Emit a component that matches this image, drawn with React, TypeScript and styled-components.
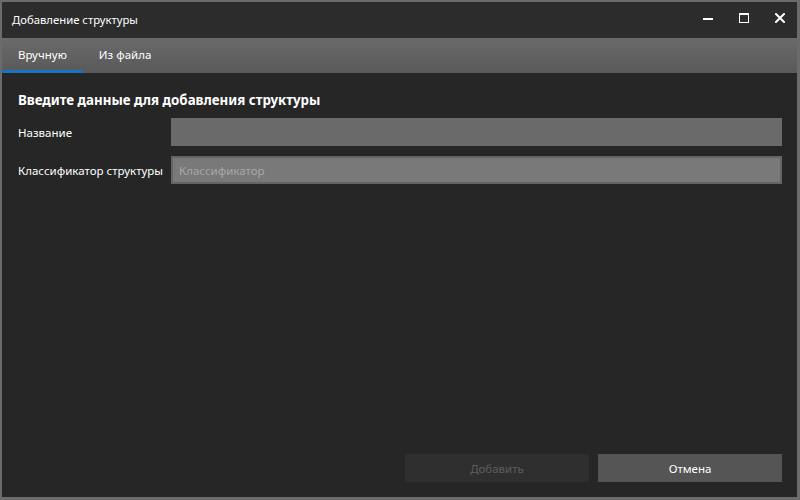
import styled, { createGlobalStyle } from 'styled-components';

const GlobalStyle = createGlobalStyle`
  html, body {
    margin: 0;
    padding: 0;
    background: #262626;
  }
  body {
    font-family: 'Noto Sans', 'Open Sans', sans-serif;
  }
`;

const Window = styled.div`
  width: 800px;
  height: 500px;
  box-sizing: border-box;
  border-style: solid;
  border-color: #6b6b6b;
  border-width: 2px 3px 3px 2px;
  display: flex;
  flex-direction: column;
  background: #262626;
  overflow: hidden;
`;

const TitleBar = styled.div`
  height: 36px;
  display: flex;
  align-items: center;
  padding-left: 10px;
  background: #2c2c2c;
  color: #ffffff;
  font-size: 11.3px;
`;

const Title = styled.div`
  flex: 1;
  margin-top: -2px;
`;

const Controls = styled.div`
  display: flex;
  align-items: center;
  height: 100%;
`;

const ControlButton = styled.div`
  width: 36px;
  height: 100%;
  box-sizing: border-box;
  padding-left: 2px;
  display: flex;
  align-items: center;
  justify-content: center;
  margin-top: -4px;
`;

const TabBar = styled.div`
  height: 35px;
  display: flex;
  align-items: stretch;
  background: linear-gradient(to bottom, #6a6a6a, #595959);
`;

const Tab = styled.div<{ $active?: boolean }>`
  display: flex;
  align-items: center;
  padding: 0 16px;
  font-size: 11.5px;
  color: #ffffff;
  box-sizing: border-box;
  border-bottom: 3px solid ${(p) => (p.$active ? '#1a73c4' : 'transparent')};
  padding-top: 1px;
`;

const Content = styled.div`
  flex: 1;
  display: flex;
  flex-direction: column;
  padding: 16px 15px 15px 16px;
`;

const Heading = styled.div`
  font-size: 13.3px;
  font-weight: 700;
  color: #ffffff;
  margin: 2px 0 9px;
`;

const FormRow = styled.div`
  display: grid;
  grid-template-columns: 153px 1fr;
  align-items: center;
  margin-bottom: 10px;
`;

const Label = styled.div`
  font-size: 11.5px;
  color: #ffffff;
`;

const Input = styled.div<{ $framed?: boolean }>`
  height: 28px;
  box-sizing: border-box;
  background: ${(p) => (p.$framed ? '#797979' : '#6a6a6a')};
  border: ${(p) => (p.$framed ? '2px solid #646464' : 'none')};
  display: flex;
  align-items: center;
  padding-left: 6px;
  font-size: 11.5px;
  color: #a8a8a8;
`;

const Spacer = styled.div`
  flex: 1;
`;

const Footer = styled.div`
  display: flex;
  justify-content: flex-end;
  gap: 9px;
`;

const Button = styled.div<{ $disabled?: boolean }>`
  width: 184px;
  height: 28px;
  display: flex;
  align-items: center;
  justify-content: center;
  font-size: 11.5px;
  background: ${(p) => (p.$disabled ? '#2f2f2f' : '#555555')};
  color: ${(p) => (p.$disabled ? '#5e5e5e' : '#ffffff')};
`;

export default function App() {
  return (
    <>
      <GlobalStyle />
      <Window>
        <TitleBar>
          <Title>Добавление структуры</Title>
          <Controls>
            <ControlButton>
              <svg width="10" height="10" viewBox="0 0 10 10">
                <rect x="0" y="5" width="10" height="2" fill="#ffffff" />
              </svg>
            </ControlButton>
            <ControlButton>
              <svg width="10" height="10" viewBox="0 0 10 10">
                <rect x="0.5" y="0.5" width="9" height="9" fill="none" stroke="#ffffff" strokeWidth="1" />
                <rect x="0" y="0" width="10" height="2" fill="#ffffff" />
              </svg>
            </ControlButton>
            <ControlButton>
              <svg width="10" height="10" viewBox="0 0 10 10">
                <path d="M1 1 L9 9 M9 1 L1 9" stroke="#ffffff" strokeWidth="2" strokeLinecap="square" />
              </svg>
            </ControlButton>
          </Controls>
        </TitleBar>
        <TabBar>
          <Tab $active>Вручную</Tab>
          <Tab>Из файла</Tab>
        </TabBar>
        <Content>
          <Heading>Введите данные для добавления структуры</Heading>
          <FormRow>
            <Label>Название</Label>
            <Input />
          </FormRow>
          <FormRow>
            <Label>Классификатор структуры</Label>
            <Input $framed>Классификатор</Input>
          </FormRow>
          <Spacer />
          <Footer>
            <Button $disabled>Добавить</Button>
            <Button>Отмена</Button>
          </Footer>
        </Content>
      </Window>
    </>
  );
}
